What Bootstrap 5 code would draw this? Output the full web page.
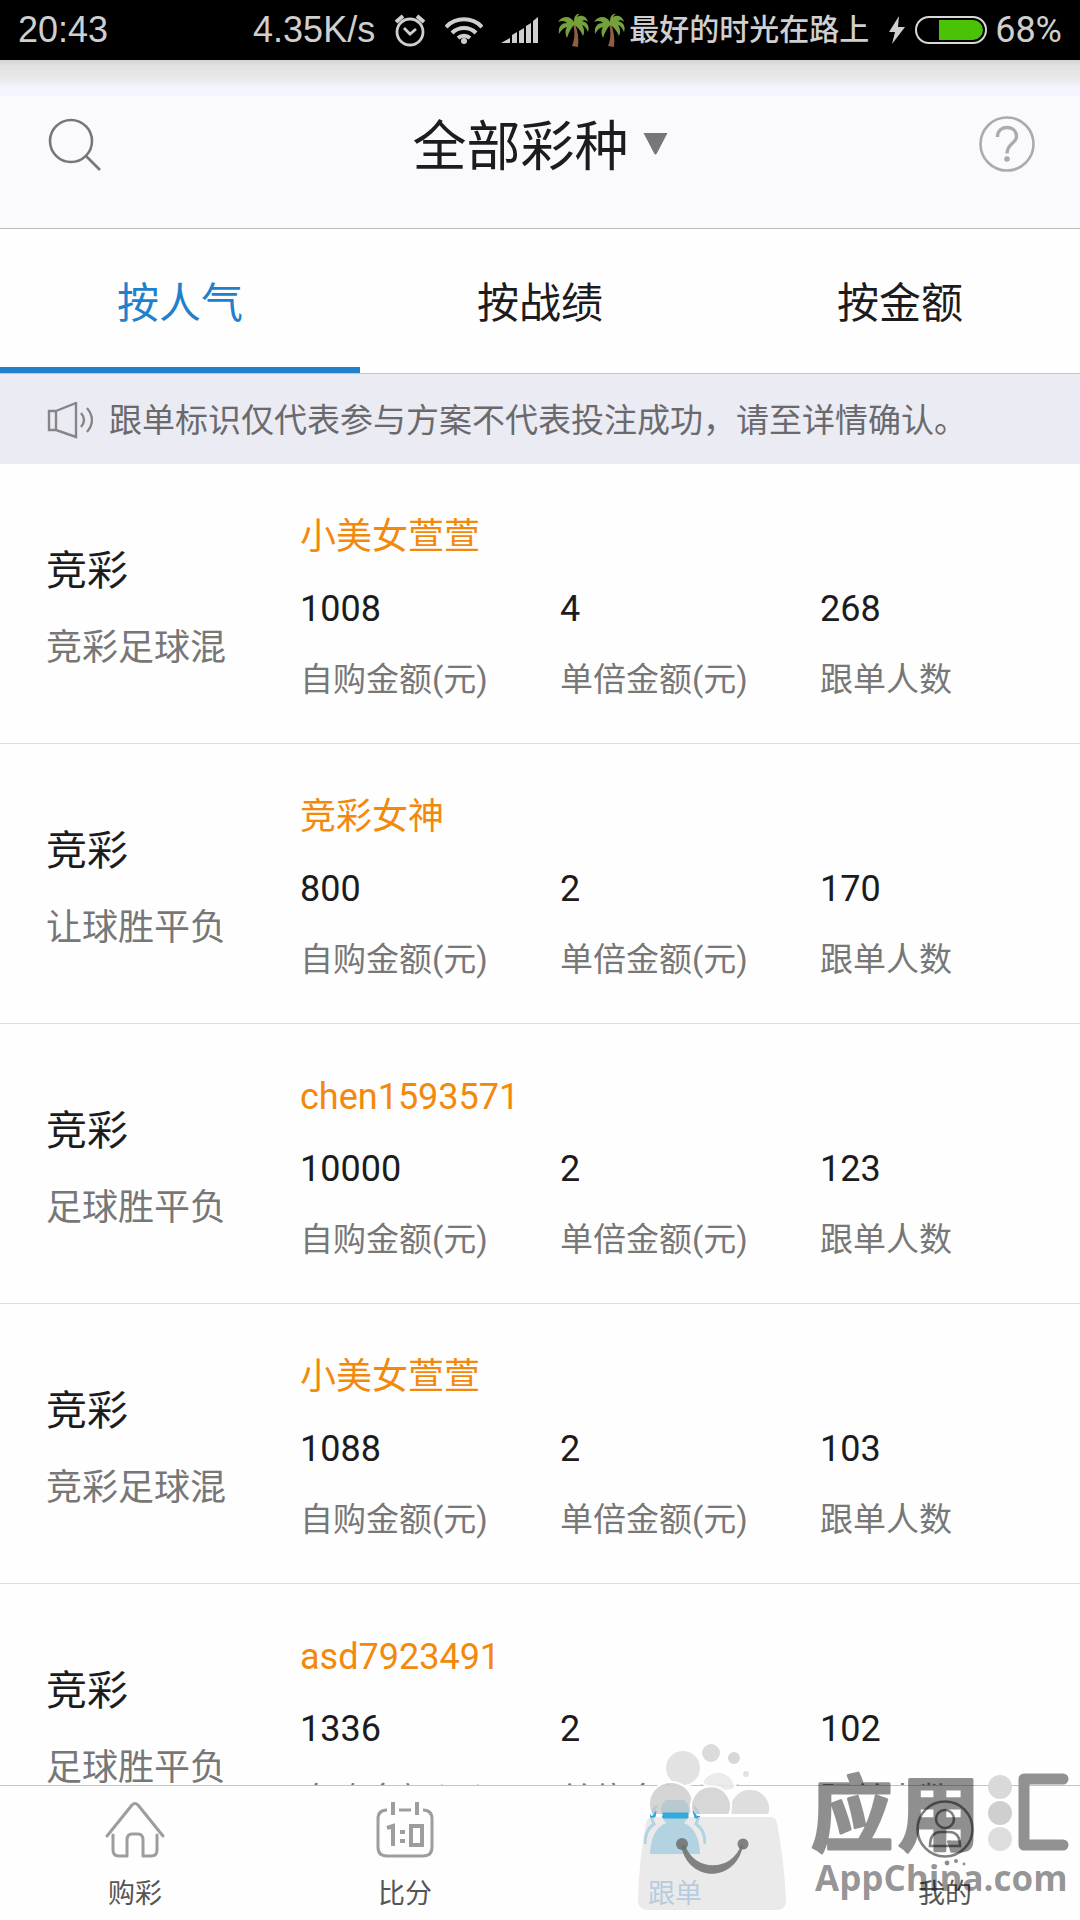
<!DOCTYPE html>
<html lang="zh-CN">
<head>
<meta charset="utf-8">
<meta name="viewport" content="width=device-width, initial-scale=1">
<title>跟单</title>
<link href="https://cdn.jsdelivr.net/npm/bootstrap@5.3.0/dist/css/bootstrap.min.css" rel="stylesheet">
<style>
  body { font-family: Roboto, "Noto Sans CJK SC", sans-serif; color: #1c1c1e; background: #fefefe; line-height: 1.5; }
  .app-shell { height: 100vh; }
  svg { display: block; flex: none; }
  .status-bar { height: 60px; padding: 0 18px; background: #000; color: #cfcfcf; font-size: 36px; line-height: 60px; }
  .status-clock { font-family: "Liberation Sans", sans-serif; }
  .status-gap { margin-left: 18px; }
  .carrier { font-size: 30px; font-weight: 500; }
  .top-bar { height: 169px; padding: 0 44px; border-bottom: 1px solid #bcbcbc;
    background: linear-gradient(#d4d4d4 0, #e2e2e2 6px, #ececee 22px, #f4f4fe 26px, #f4f4fe 36px, #fafafe 36px); }
  .top-bar .btn { padding: 0; border: 0; }
  .title-btn { gap: 14px; font-size: 54px; line-height: 80px; color: #1c1c1e; }
  .sort-tabs { height: 145px; border-bottom: 1px solid #c8c8cc; background: #fefefe; }
  .sort-tabs .nav-link { height: 144px; padding: 0; border-radius: 0; font-size: 42px; line-height: 149px; color: #1c1c1e; border-bottom: 0 solid #1f80cb; }
  .sort-tabs .nav-link.active { color: #1f80cb; border-bottom-width: 6px; }
  .notice { height: 90px; padding: 4px 46px 0; background: #ebebf3; color: #6a6a6e; font-size: 33px; }
  .order-item { height: 280px; border-bottom: 1px solid #dedede; color: inherit; text-decoration: none; }
  .order-kind { width: 300px; padding: 76px 0 0 46px; }
  .order-body { padding-top: 46px; }
  .kind-name { font-size: 41px; line-height: 62px; }
  .kind-sub { font-size: 36px; line-height: 54px; margin-top: 19px; color: #777; }
  .user-name { font-size: 36px; line-height: 54px; color: #f3890c; }
  .figure-num { font-size: 36px; line-height: 54px; margin-top: 18px; }
  .figure-label { font-size: 33px; line-height: 50px; margin-top: 19px; color: #777; }
  .bottom-nav { height: 135px; border-top: 1px solid #c4c4c4; background: #fefefe; }
  .bottom-nav .nav-link { padding: 14px 0 0; font-size: 27px; line-height: 40px; color: #555; }
  .bottom-nav .nav-link.active { color: #1f80cb; background: none; }
  .bottom-nav svg { margin: 0 auto 16px; }
  .store-mark { right: 0; bottom: 0; pointer-events: none; z-index: 5; }
  .mark-cn { font: 700 82px "Noto Sans CJK SC", sans-serif; }
  .mark-en { font: 700 35px "Open Sans", sans-serif; }
</style>
</head>
<body>
<svg width="0" height="0" class="position-absolute" aria-hidden="true">
  <symbol id="palm" viewBox="0 0 32 34">
    <path d="M16 11C18 18 18 26 15 33l6 1c1-8 0-16-3-23z" fill="#8d5d45"/>
    <path d="M17 9C13 2 5 3 1 9c5-2 7-1 9 1C4 10 1 14 2 21c3-5 5-6 8-7-2 3-2 7 0 11 2-6 4-10 7-13 4 2 7 6 9 11 2-4 1-8-1-11 3 1 4 3 6 7 2-6-1-10-6-11 2-1 4-1 6 1C30 4 25 1 20 4c1-2 2-3 3-3-4-1-6 3-6 8z" fill="#75a03c"/>
  </symbol>
</svg>

<div class="app-shell d-flex flex-column overflow-hidden position-relative">
  <div class="status-bar d-flex align-items-center flex-shrink-0">
    <span class="status-clock me-auto">20:43</span>
    <span class="status-clock">4.35K/s</span>
    <svg class="status-gap" width="34" height="34" viewBox="0 0 34 34" fill="none" stroke="#cfcfcf" stroke-width="2.8"><circle cx="17" cy="19" r="13"/><path d="M3 9l7-6M31 9l-7-6" stroke-width="4"/><path d="M11 15l6 6 6-5"/></svg>
    <svg class="status-gap" width="38" height="28" viewBox="0 0 38 28" fill="none" stroke="#cfcfcf" stroke-width="4"><path d="M1 11a25 25 0 0 1 36 0M7 17a17 17 0 0 1 24 0M13 22a9 9 0 0 1 12 0"/><circle cx="19" cy="25" r="3" fill="#cfcfcf" stroke="none"/></svg>
    <svg class="status-gap" width="38" height="28" viewBox="0 0 38 28" fill="#cfcfcf"><path d="M0 27l9-5v5zM11 19l5-3v11h-5zM18 15l5-3v15h-5zM25 10l5-3v20h-5zM32 5l5-4v26h-5z"/></svg>
    <svg class="status-gap" width="32" height="34"><use href="#palm"/></svg>
    <svg class="ms-1" width="32" height="34"><use href="#palm"/></svg>
    <span class="carrier ms-1">最好的时光在路上</span>
    <svg class="status-gap" width="20" height="30" viewBox="0 0 20 30" fill="#cfcfcf"><path d="M12 1L2 17h6L5 29 18 12h-7z"/></svg>
    <svg class="ms-2" width="72" height="28" viewBox="0 0 72 28"><rect x="1" y="1" width="70" height="26" rx="13" fill="none" stroke="#d8d8d8" stroke-width="2"/><path d="M24 4h34a10 10 0 0 1 0 20H24z" fill="#49c208"/></svg>
    <span class="ms-2">68%</span>
  </div>

  <header class="top-bar d-flex align-items-center justify-content-between flex-shrink-0">
    <button class="btn" type="button" aria-label="搜索">
      <svg width="58" height="58" viewBox="0 0 58 58" fill="none" stroke="#77777a" stroke-width="2.6"><circle cx="27" cy="26" r="21"/><path d="M42 41l14 14"/></svg>
    </button>
    <button class="btn title-btn d-flex align-items-center" type="button"><span class="pt-2">全部彩种</span>
      <svg width="25" height="22" viewBox="0 0 25 22"><path d="M1 0h23L13 21h-1z" fill="#77777a" stroke="#77777a"/></svg>
    </button>
    <button class="btn" type="button" aria-label="帮助">
      <svg width="58" height="58" viewBox="0 0 58 58" fill="none" stroke="#ababad" stroke-width="2.6"><circle cx="29" cy="29" r="26.5"/><path d="M19.500 22c0-6 4-9.500 9.500-9.500s9.500 3.500 9.500 9c0 7-9.500 7-9.500 17" stroke-width="3.4"/><circle cx="29" cy="44" r="2.800" fill="#ababad" stroke="none"/></svg>
    </button>
  </header>

  <ul class="sort-tabs nav nav-justified flex-shrink-0">
    <li class="nav-item"><a class="nav-link active" href="#">按人气</a></li>
    <li class="nav-item"><a class="nav-link" href="#">按战绩</a></li>
    <li class="nav-item"><a class="nav-link" href="#">按金额</a></li>
  </ul>

  <div class="notice d-flex align-items-center flex-shrink-0">
    <svg class="me-3" width="47" height="38" viewBox="0 0 47 38" fill="none" stroke="#86868a" stroke-width="2.4"><path d="M3 9h7v19H3zM10 9L30 1v34L10 28M35 11q6 7 0 14M41 6q10 12 0 24"/></svg>
    <span>跟单标识仅代表参与方案不代表投注成功，请至详情确认。</span>
  </div>

  <main class="flex-grow-1 overflow-hidden" id="orders"></main>

  <nav class="bottom-nav nav nav-justified flex-shrink-0">
    <a class="nav-item nav-link" href="#">
      <svg width="62" height="58" viewBox="0 0 62 58" fill="none" stroke="#9d9d9d" stroke-width="3" stroke-linecap="round"><path d="M3 36L28 5q3-3 6 0l25 31M9 35v15q0 6 6 6h8V40q0-6 5-6h6q5 0 5 6v16h8q6 0 6-6V35" stroke-linejoin="round"/></svg>购彩</a>
    <a class="nav-item nav-link" href="#">
      <svg width="62" height="58" viewBox="0 0 62 58" fill="none" stroke="#9d9d9d" stroke-width="3"><path d="M13 10q-9 0-9 9v28q0 9 9 9h36q9 0 9-9V19q0-9-9-9M25 10h12"/><path d="M19 2v13M43 2v13M13 28l6-2v20M37 26h11v19H37z" stroke-width="4"/><path d="M26 30h5v4h-5zM26 39h5v4h-5z" fill="#9d9d9d" stroke="none"/></svg>比分</a>
    <a class="nav-item nav-link active" href="#">
      <svg width="62" height="58" viewBox="0 0 62 58"><path d="M17 10a14 13 0 0 1 28 0q0 8-5 13 15 6 16 31H6q1-25 16-31-5-5-5-13z" fill="#1c9cdc"/><path d="M13 6q-9 8-3 18Q1 30 1 44M49 6q9 8 3 18 9 6 9 20" fill="none" stroke="#1c9cdc" stroke-width="3"/></svg>跟单</a>
    <a class="nav-item nav-link" href="#">
      <svg width="62" height="58" viewBox="0 0 62 58" fill="none" stroke="#808080" stroke-width="2.6"><circle cx="31" cy="29" r="27.500"/><circle cx="31" cy="19" r="9"/><path d="M16 46q0-14 11-14h8q11 0 11 14z"/></svg>我的</a>
  </nav>

  <svg class="store-mark position-absolute" width="450" height="185" viewBox="630 1735 450 185" role="img" aria-label="应用汇 AppChina.com">
    <g stroke="#fff" stroke-width="2" fill="#dedede" fill-opacity=".88">
      <circle cx="683" cy="1768" r="18"/><path d="M702 1783a17 17 0 0 1 33 6q-16 6-33-6z" fill="#e8e8e8"/>
      <circle cx="711" cy="1753" r="10" fill="#d6d6d6"/><circle cx="734" cy="1758" r="7" fill="#d2d2d2"/><circle cx="746" cy="1774" r="4"/>
      <path d="M652 1815a22 22 0 1 1 38 0z" fill="#cfcfcf"/>
      <path d="M731 1815a20 20 0 1 1 38 0z" fill="#d9d9d9"/>
      <path d="M693 1815a20 20 0 1 1 36 0z" fill="#d2d2d2"/>
    </g>
    <path d="M654 1817h116q6 0 7 6 7 36 9 76 1 11-10 11H648q-10 0-10-11 1-38 8-76 1-6 8-6z" fill="#e4e4e4" fill-opacity=".76"/>
    <path d="M663 1813h25v5h-25zM656 1811l-4 6h3zM693 1811l5 7h-3z" fill="#34aadc" stroke="#34aadc"/>
    <g fill="#6e6e6e" fill-opacity=".85"><circle cx="682" cy="1844" r="6"/><circle cx="743" cy="1844" r="5.500"/>
      <path d="M681 1846c8 37 54 37 62 0l-2-1c-9 27-47 27-56 0z"/></g>
    <g class="mark-cn" stroke="#000" stroke-width="3" stroke-linejoin="round" opacity=".43">
      <text x="811" y="1844">应</text><text x="898" y="1844">用</text>
    </g>
    <text class="mark-en" x="815" y="1891" fill-opacity=".43">AppChina.com</text>
    <g fill="#d9d9d9"><circle cx="1000" cy="1787" r="12"/><circle cx="1000" cy="1813" r="12" fill="#cfcfcf"/><circle cx="1000" cy="1839" r="12" fill="#dedede"/></g>
    <path d="M1063 1779h-39v66h39" fill="none" stroke="#919191" stroke-width="11" stroke-linecap="round" stroke-linejoin="round"/>
    <g fill="#8c8c8c"><circle cx="947" cy="1863" r="2.400"/><circle cx="956" cy="1861" r="2"/><circle cx="964" cy="1864" r="1.400"/></g>
  </svg>
</div>

<script src="https://cdn.jsdelivr.net/npm/bootstrap@5.3.0/dist/js/bootstrap.bundle.min.js"></script>
<script>
  const orders = [
    ['竞彩足球混', '小美女萱萱', 1008, 4, 268],
    ['让球胜平负', '竞彩女神', 800, 2, 170],
    ['足球胜平负', 'chen1593571', 10000, 2, 123],
    ['竞彩足球混', '小美女萱萱', 1088, 2, 103],
    ['足球胜平负', 'asd7923491', 1336, 2, 102]
  ];
  const labels = ['自购金额(元)', '单倍金额(元)', '跟单人数'];
  document.getElementById('orders').innerHTML = orders.map(([sub, user, ...nums]) => `
    <a class="order-item d-flex" href="#">
      <div class="order-kind flex-shrink-0"><div class="kind-name">竞彩</div><div class="kind-sub">${sub}</div></div>
      <div class="order-body flex-grow-1">
        <div class="user-name">${user}</div>
        <div class="row g-0">${nums.map((n, i) => `
          <div class="col-4"><div class="figure-num">${n}</div><div class="figure-label">${labels[i]}</div></div>`).join('')}
        </div>
      </div>
    </a>`).join('');
</script>
</body>
</html>
